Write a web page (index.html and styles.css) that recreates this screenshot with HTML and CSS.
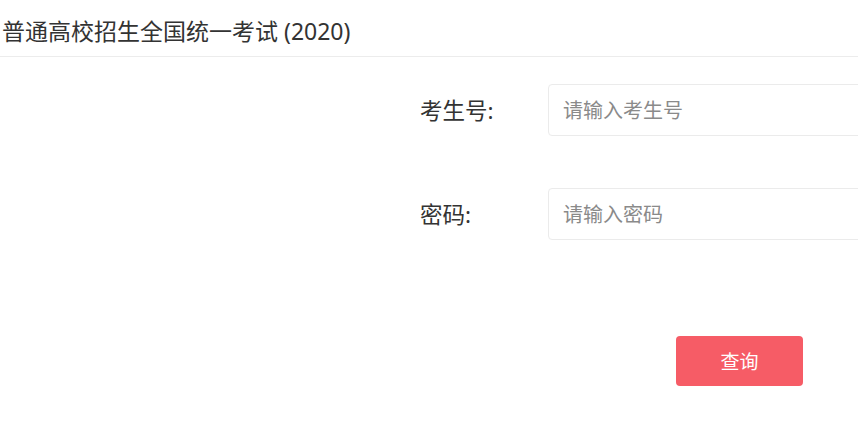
FILE: index.html
```html
<!DOCTYPE html>
<html lang="zh-CN">
<head>
<meta charset="utf-8">
<title>普通高校招生全国统一考试 (2020)</title>
<link rel="stylesheet" href="styles.css">
</head>
<body>
<header class="header">
  <h1 class="title">普通高校招生全国统一考试 (2020)</h1>
</header>
<main class="form">
  <div class="row">
    <label class="label" for="ksh">考生号:</label>
    <input class="input" id="ksh" type="text" placeholder="请输入考生号">
  </div>
  <div class="row">
    <label class="label" for="pwd">密码:</label>
    <input class="input" id="pwd" type="password" placeholder="请输入密码">
  </div>
  <div class="actions">
    <button class="btn" type="button">查询</button>
  </div>
</main>
</body>
</html>
```
FILE: styles.css
```css
html, body {
  margin: 0;
  padding: 0;
  overflow: hidden;
  background: #fff;
}
body {
  font-family: "Noto Sans", "Noto Sans CJK SC", sans-serif;
  color: #333;
  width: 858px;
  height: 424px;
}
.header {
  height: 56px;
  border-bottom: 1px solid #ececec;
  display: flex;
  align-items: center;
  padding-left: 2px;
}
.title {
  margin: 0;
  font-size: 23px;
  font-weight: normal;
  color: #333;
  line-height: 1;
  padding-top: 6px;
}
.form {
  padding-top: 27px;
  padding-left: 420px;
  display: flex;
  flex-direction: column;
  gap: 52px;
}
.row {
  display: flex;
  align-items: center;
  height: 52px;
}
.label {
  width: 128px;
  flex: none;
  font-size: 22.5px;
  color: #333;
  padding-bottom: 2px;
}
.input {
  flex: none;
  box-sizing: border-box;
  width: 382px;
  height: 52px;
  border: 1px solid #ebebeb;
  border-radius: 4px;
  padding: 0 14px;
  font-family: "Noto Sans", "Noto Sans CJK SC", sans-serif;
  font-size: 20px;
  color: #333;
  outline: none;
  background: #fff;
}
.input::placeholder {
  color: #8a8a8a;
}
.actions {
  margin-top: 44px;
  padding-left: 256px;
}
.btn {
  width: 127px;
  height: 50px;
  border: none;
  border-radius: 4px;
  background: #f65c66;
  color: #fff;
  font-family: "Noto Sans", "Noto Sans CJK SC", sans-serif;
  font-size: 19px;
  cursor: pointer;
}
```
